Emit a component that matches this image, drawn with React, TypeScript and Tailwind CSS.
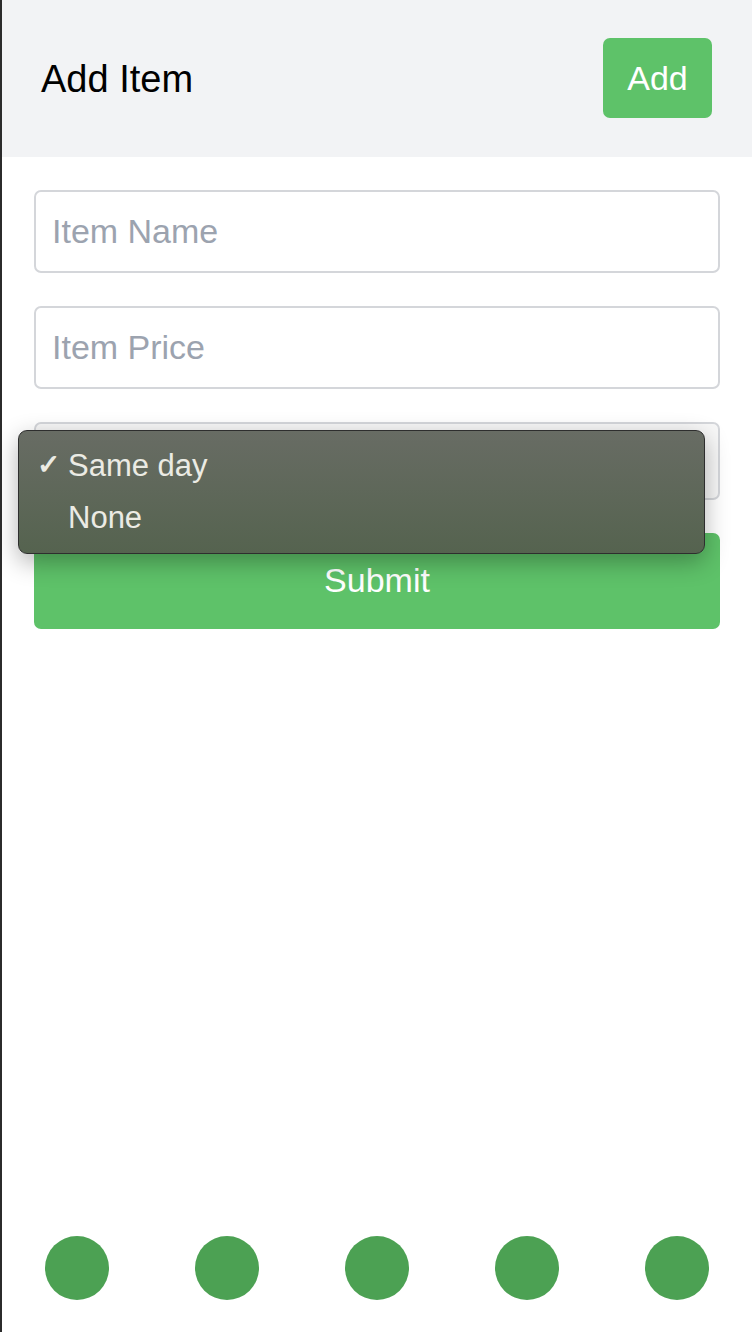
import React from "react";

export default function App() {
  const font = { fontFamily: '"Liberation Sans", Arial, Helvetica, sans-serif' };
  return (
    <div
      className="relative flex flex-col h-[1332px] w-[752px] border-l-2 border-[#2b2b2b] bg-white overflow-hidden"
      style={font}
    >
      <header className="h-[157px] shrink-0 bg-[#f2f3f5] flex items-center justify-between pl-[39px] pr-[40px]">
        <h1 className="text-[38px] leading-none text-black">Add Item</h1>
        <button className="w-[109px] h-[80px] -mt-[2px] rounded-[7px] bg-[#5ec269] text-white text-[34px] leading-none">
          Add
        </button>
      </header>

      <div className="flex flex-col gap-[33px] px-[32px] pt-[33px]">
        <div className="h-[83px] rounded-[7px] border-2 border-[#d4d6da] flex items-center px-[16px] pb-[2px]">
          <span className="text-[34px] leading-none text-[#9ca3af]">Item Name</span>
        </div>
        <div className="h-[83px] rounded-[7px] border-2 border-[#d4d6da] flex items-center px-[16px] pb-[2px]">
          <span className="text-[34px] leading-none text-[#9ca3af]">Item Price</span>
        </div>
        <div className="h-[78px] rounded-[7px] border-2 border-[#d4d6da] bg-[#f7f7f7]" />
        <button className="h-[96px] rounded-[7px] bg-[#5ec269] text-white text-[34px] leading-none pb-[3px]">
          Submit
        </button>
      </div>

      <div className="flex-1" />

      <div className="flex justify-around pb-[32px]">
        {[0, 1, 2, 3, 4].map((i) => (
          <div key={i} className="w-[64px] h-[64px] rounded-full bg-[#4ca153]" />
        ))}
      </div>

      <div className="absolute left-[16px] top-[430px] w-[687px] h-[124px] rounded-[9px] border border-[#2e2e2e] bg-gradient-to-b from-[#686c64] to-[#55634f] shadow-[0_8px_24px_rgba(0,0,0,0.3)] pt-[15px]">
        <div className="flex items-center h-[38px] text-[#ebebe4] text-[31px] leading-none">
          <span className="w-[49px] pl-[18px] text-[28px] font-bold">✓</span>
          <span>Same day</span>
        </div>
        <div className="flex items-center h-[38px] mt-[14px] text-[#ebebe4] text-[31px] leading-none">
          <span className="w-[49px]"></span>
          <span>None</span>
        </div>
      </div>
    </div>
  );
}
